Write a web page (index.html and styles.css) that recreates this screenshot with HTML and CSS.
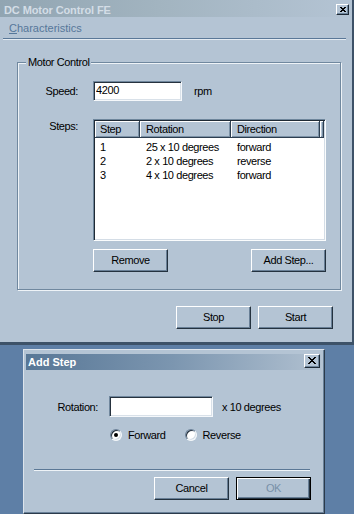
FILE: index.html
```html
<!DOCTYPE html>
<html>
<head>
<meta charset="utf-8">
<link rel="stylesheet" href="styles.css">
</head>
<body>
<div class="window">
  <div class="titlebar">
    <span class="title">DC Motor Control FE</span>
    <span class="close close-sm"><svg width="6" height="5" viewBox="0 0 6 5" shape-rendering="crispEdges"><path d="M0 0h2v1H0zM4 0h2v1H4zM1 1h4v1H1zM2 2h2v1H2zM1 3h4v1H1zM0 4h2v1H0zM4 4h2v1H4z" fill="#000"/></svg></span>
  </div>
  <div class="menubar"><span class="menu"><u>C</u>haracteristics</span></div>
  <div class="menusep"></div>
  <div class="group">
    <span class="group-label">Motor Control</span>
    <div class="row speed-row">
      <span class="lbl">Speed:</span>
      <input class="field speed" value="4200">
      <span class="unit">rpm</span>
    </div>
    <div class="row steps-row">
      <span class="lbl lbl-top">Steps:</span>
      <div class="list">
        <div class="list-head">
          <div class="hcell c1">Step</div>
          <div class="hcell c2">Rotation</div>
          <div class="hcell c3">Direction</div>
          <div class="hcell c4"></div>
        </div>
        <div class="list-body">
          <div class="item"><span class="c1">1</span><span class="c2">25 x 10 degrees</span><span class="c3">forward</span></div>
          <div class="item"><span class="c1">2</span><span class="c2">2 x 10 degrees</span><span class="c3">reverse</span></div>
          <div class="item"><span class="c1">3</span><span class="c2">4 x 10 degrees</span><span class="c3">forward</span></div>
        </div>
      </div>
    </div>
    <div class="row btn-row">
      <button class="btn">Remove</button>
      <button class="btn">Add Step...</button>
    </div>
  </div>
  <div class="actions">
    <button class="btn">Stop</button>
    <button class="btn">Start</button>
  </div>
</div>

<div class="dialog">
  <div class="dtitlebar">
    <span class="dtitle">Add Step</span>
    <span class="close close-lg"><svg width="8" height="7" viewBox="0 0 8 7" shape-rendering="crispEdges"><path d="M0 0h2v1H0zM6 0h2v1H6zM1 1h2v1H1zM5 1h2v1H5zM2 2h4v1H2zM3 3h2v1H3zM2 4h4v1H2zM1 5h2v1H1zM5 5h2v1H5zM0 6h2v1H0zM6 6h2v1H6z" fill="#000"/></svg></span>
  </div>
  <div class="drow">
    <span class="dlbl">Rotation:</span>
    <input class="field rot" value="">
    <span class="unit2">x 10 degrees</span>
  </div>
  <div class="radios">
    <span class="radio"><span class="dot checked"></span>Forward</span>
    <span class="radio rev"><span class="dot"></span>Reverse</span>
  </div>
  <div class="dsep"></div>
  <div class="dbuttons">
    <button class="btn">Cancel</button>
    <button class="btn default">OK</button>
  </div>
</div>
</body>
</html>
```
FILE: styles.css
```css
* { box-sizing: border-box; }
html, body { margin: 0; padding: 0; }
body {
  width: 354px;
  height: 514px;
  overflow: hidden;
  background: #5e7fa6;
  font: 11px "Liberation Sans", Arial, sans-serif;
  letter-spacing: -0.4px;
  color: #000;
}

.window {
  width: 354px;
  height: 345px;
  background: #b4c4d4;
  border-right: 2px solid #3d5268;
  border-bottom: 3px solid #3d5268;
  display: flex;
  flex-direction: column;
}

.titlebar {
  height: 17px;
  flex: none;
  display: flex;
  justify-content: space-between;
  align-items: flex-start;
  padding: 0 3px 0 4px;
  background: linear-gradient(90deg, #91a5b2 0%, #a2b4c0 45%, #b4c4d4 100%);
}
.title {
  font-weight: bold;
  color: #d3dde6;
  line-height: 14px;
  padding-top: 3px;
  letter-spacing: -0.1px;
}

.close {
  display: flex;
  align-items: center;
  justify-content: center;
  background: #b4c4d4;
  border: 1px solid;
  border-color: #ffffff #1e2a36 #1e2a36 #ffffff;
  box-shadow: inset -1px -1px 0 #6f869c;
}
.close svg { display: block; }
.close-sm { width: 13px; height: 11px; margin-top: 4px; padding-bottom: 1px; }
.close-lg { width: 16px; height: 14px; padding-bottom: 1px; }

.menubar {
  height: 21px;
  flex: none;
  padding: 5px 0 0 9px;
  line-height: 13px;
}
.menu { color: #56779a; letter-spacing: 0; }
.menu u { text-decoration: underline; }

.menusep {
  height: 2px;
  flex: none;
  margin: 0 6px 0 3px;
  border-top: 1px solid #5a7898;
  border-bottom: 1px solid #e4ebf2;
}

.group {
  flex: none;
  width: 324px;
  height: 228px;
  margin: 22px 0 0 17px;
  border: 1px solid #70889f;
  box-shadow: inset 1px 1px 0 #eef3f7, 1px 1px 0 #eef3f7;
}
.group-label {
  display: block;
  width: max-content;
  margin: -7px 0 0 8px;
  padding: 0 2px;
  line-height: 13px;
  background: #b4c4d4;
}

.row { display: flex; align-items: center; }
.lbl { width: 60px; margin-right: 15px; text-align: right; line-height: 13px; }
.lbl-top { padding-top: 1px; }

.speed-row { margin-top: 12px; }
.steps-row { margin-top: 18px; align-items: flex-start; }
.btn-row { margin-top: 8px; margin-left: 75px; width: 233px; justify-content: space-between; }

.field {
  height: 20px;
  padding: 0 2px 3px;
  border: 1px solid;
  border-color: #70879d #f5f8fb #f5f8fb #70879d;
  box-shadow: inset 1px 1px 0 #26323e, inset -1px -1px 0 #d9e1e9;
  background: #fff;
  font: inherit;
  letter-spacing: inherit;
  color: #000;
  outline: none;
  margin: 0;
}
.speed { width: 89px; }
.unit { margin-left: 12px; }

.list {
  width: 233px;
  height: 122px;
  padding: 1px;
  background: #fff;
  border: 1px solid;
  border-color: #6e869c #fafcfd #fafcfd #6e869c;
  box-shadow: inset 1px 1px 0 #1f2a35, inset -1px -1px 0 #d4dde6;
}
.list-head { display: flex; height: 17px; }
.hcell {
  height: 17px;
  padding: 2px 0 0 6px;
  line-height: 13px;
  background: #b4c4d4;
  border-right: 1px solid #2d3e50;
  border-bottom: 1px solid #2d3e50;
  box-shadow: inset 1px 1px 0 #ffffff, inset -1px -1px 0 #7b91a6;
  white-space: nowrap;
}
.c1 { width: 45px; flex: none; }
.c2 { width: 91px; flex: none; }
.c3 { width: 89px; flex: none; }
.hcell.c1 { padding-left: 5px; }
.hcell.c4 { flex: 1; padding: 0; }
.list-body { padding-top: 2px; }
.item { display: flex; height: 14px; line-height: 14px; white-space: nowrap; }
.item span { padding-left: 6px; }
.item .c1 { padding-left: 5px; }

.btn {
  width: 75px;
  height: 23px;
  margin: 0;
  padding: 0 0 1px;
  background: #b4c4d4;
  border: 1px solid;
  border-color: #ffffff #24323f #24323f #ffffff;
  box-shadow: inset -1px -1px 0 #687f96;
  font: inherit;
  letter-spacing: inherit;
  color: #000;
}

.actions {
  display: flex;
  justify-content: flex-end;
  gap: 7px;
  margin-top: 16px;
  padding-right: 19px;
}

.dialog {
  width: 302px;
  height: 165px;
  margin: 4px 0 0 23px;
  overflow: hidden;
  background: #b4c4d4;
  border: 1px solid;
  border-color: #dce4ec #2b3b4b #2b3b4b #dce4ec;
  box-shadow: inset -1px -1px 0 #6a8198;
  padding: 4px 3px 0 2px;
}
.dtitlebar {
  height: 16px;
  display: flex;
  justify-content: space-between;
  align-items: flex-start;
  padding: 0 1px 0 2px;
  background: linear-gradient(90deg, #587796 0%, #7c96b0 50%, #b0c0d0 100%);
}
.dtitle {
  font-weight: bold;
  color: #ffffff;
  line-height: 16px;
  letter-spacing: 0;
}

.drow { display: flex; align-items: center; margin-top: 26px; }
.dlbl { width: 72px; margin-right: 11px; text-align: right; }
.rot { width: 104px; height: 21px; }
.unit2 { margin-left: 9px; }

.radios { display: flex; align-items: center; margin-top: 12px; padding-left: 84px; height: 12px; }
.radio { display: flex; align-items: center; gap: 6px; line-height: 13px; }
.radio.rev { margin-left: 19px; }
.dot {
  width: 12px;
  height: 12px;
  border-radius: 50%;
  background: #fff;
  border: 1px solid;
  border-color: #6a8098 #f2f6f9 #f2f6f9 #6a8098;
  box-shadow: inset 1px 1px 0 #25313d, inset -1px -1px 0 #d4dde6;
  display: flex;
  align-items: center;
  justify-content: center;
}
.dot.checked::after {
  content: "";
  width: 4px;
  height: 4px;
  border-radius: 50%;
  background: #000;
}

.dsep {
  height: 2px;
  margin: 28px 11px 0 8px;
  border-top: 1px solid #5b7896;
  border-bottom: 1px solid #eef3f7;
}
.dbuttons {
  display: flex;
  justify-content: flex-end;
  gap: 7px;
  margin-top: 6px;
  padding-right: 10px;
}
.btn.default {
  border: 1px solid #000;
  box-shadow: inset 1px 1px 0 #ffffff, inset -1px -1px 0 #24323f, inset -2px -2px 0 #687f96;
  color: #7890a8;
}
```
